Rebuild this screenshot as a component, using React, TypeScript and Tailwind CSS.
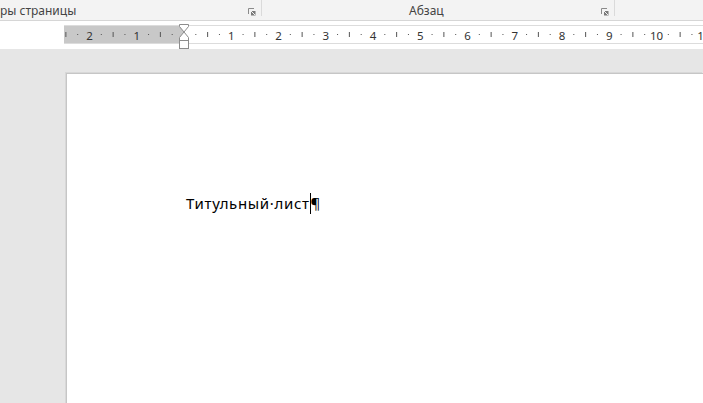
import React from "react";

const CM = 47.25;
const ORIGIN = 120; // zero point inside the ruler strip (x=184 on page)

function Launcher() {
  return (
    <svg width="8" height="8" viewBox="0 0 8 8" className="block">
      <path d="M0.5 6V0.5H6" fill="none" stroke="#8a8a8a" strokeWidth="1" />
      <rect x="3" y="3" width="4.5" height="4.5" fill="#7a7a7a" />
      <path d="M3 3L7 7" stroke="#f3f3f3" strokeWidth="1" />
    </svg>
  );
}

function Ruler() {
  const marks: React.ReactNode[] = [];
  for (let q = -10; q <= 44; q++) {
    const x = ORIGIN + (q * CM) / 4;
    if (q === 0) continue;
    const r = ((q % 4) + 4) % 4;
    if (r === 0) {
      marks.push(
        <text key={q} x={x} y={13.5} textAnchor="middle" fontSize="11.5" fill="#333" fontFamily="'Noto Sans', sans-serif">
          {Math.abs(q / 4)}
        </text>
      );
    } else if (r === 2) {
      marks.push(<rect key={q} x={x - 0.5} y={6} width={1} height={5} fill="#555" />);
    } else {
      marks.push(<rect key={q} x={x - 0.5} y={8} width={1} height={1} fill="#555" />);
    }
  }
  return (
    <div className="relative h-[19px] flex-1 border-y border-[#dcdcdc] bg-white">
      <svg width="660" height="17" className="absolute left-0 top-0 block">
        <rect x="0" y="0" width={ORIGIN} height="17" fill="#c8c8c8" />
        {marks}
      </svg>
      {/* first-line / hanging indent markers */}
      <svg width="12" height="28" className="absolute left-[114px] top-[-2px] block">
        <path d="M1.5 0.5H10.5V2.5L6 8L1.5 2.5Z" fill="#fff" stroke="#8c8c8c" />
        <path d="M6 8L1.5 13.5V16.5H10.5V13.5Z" fill="#fff" stroke="#8c8c8c" />
        <rect x="1.5" y="16.5" width="9" height="8" fill="#fff" stroke="#8c8c8c" />
      </svg>
    </div>
  );
}

export default function App() {
  return (
    <div className="w-[703px] h-[403px] overflow-hidden bg-[#e6e6e6] font-['Noto_Sans',sans-serif]">
      {/* ribbon group labels */}
      <div className="flex h-[21px] bg-[#f3f3f3] border-b border-[#d6d6d6] text-[12px] text-[#444]">
        <div className="relative w-[262px] border-r border-[#dadada] h-[16px]">
          <span className="absolute left-0 top-[3px] leading-[16px]">ры страницы</span>
          <span className="absolute left-[248px] top-[8px]"><Launcher /></span>
        </div>
        <div className="relative w-[353px] border-r border-[#dadada] h-[16px]">
          <span className="absolute left-[147px] top-[3px] leading-[16px]">Абзац</span>
          <span className="absolute left-[339px] top-[8px]"><Launcher /></span>
        </div>
      </div>

      {/* ruler band */}
      <div className="flex h-[28px] bg-white pt-[4px] pl-[64px]">
        <Ruler />
      </div>

      {/* document area */}
      <div className="pl-[66px] pt-[24px]">
        <div className="h-[340px] bg-white border-l border-t border-[#c6c6c6] shadow-[-1px_-1px_0_#d8d8d8] pl-[119px] pt-[119px]">
          <div className="flex items-center text-[15px] tracking-[0.65px] text-black font-['Noto_Sans',sans-serif] leading-[21px]">
            <span>Титульный·лист</span>
            <span className="inline-block w-[1px] h-[21px] bg-black" />
            <span>¶</span>
          </div>
        </div>
      </div>
    </div>
  );
}
